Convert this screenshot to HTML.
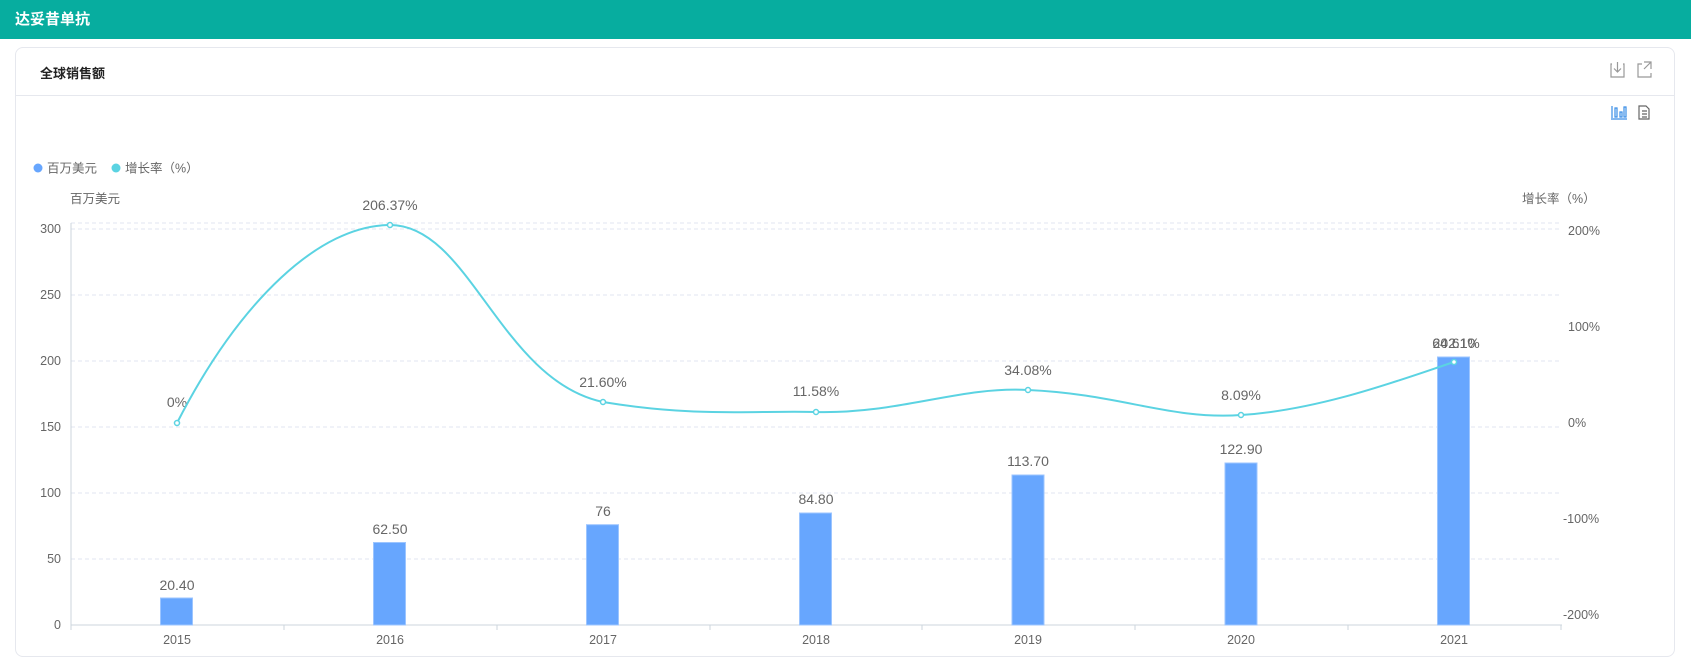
<!DOCTYPE html>
<html><head><meta charset="utf-8"><style>
body{margin:0;width:1691px;height:671px;background:#fff;font-family:"Liberation Sans","Noto Sans CJK SC",sans-serif;overflow:hidden;position:relative}
.top{position:absolute;left:0;top:0;width:1691px;height:39px;background:#07ad9f;color:#fff;font-weight:bold;font-size:15px;line-height:39px;padding-left:15px;box-sizing:border-box}
.card{position:absolute;left:15px;top:47px;width:1660px;height:610px;border:1px solid #e6e8ee;border-radius:8px;box-sizing:border-box}
.hd{position:absolute;left:0;top:47px;width:100%;height:0;border-top:1px solid #e6e8ee}
.title{position:absolute;left:24px;top:15px;font-size:13px;font-weight:bold;color:#222}
svg{position:absolute;left:0;top:0}
</style></head><body>
<div class="top">达妥昔单抗</div>
<div class="card"><div class="title">全球销售额</div><div class="hd"></div></div>
<svg width="1691" height="671" font-family="Liberation Sans, Noto Sans CJK SC, sans-serif">
<g fill="none" stroke="#999" stroke-width="1.2">
<path d="M1612 64h-1v13h13v-13h-1"/><path d="M1617.5 62v10M1614 68.5l3.5 3.5 3.5-3.5"/>
<path d="M1642 64h-4v13h13v-4"/><path d="M1644 62h7v7M1651 62l-7 7"/>
</g>
<g fill="none" stroke="#3a8ee6" stroke-width="1.2"><path d="M1612 106v12M1615 108h2v9h-2zM1620 112h2v5h-2zM1624 107h2v10h-2zM1611 119h16"/></g>
<g fill="none" stroke="#666" stroke-width="1.2"><path d="M1639 106h7l3 3v10h-10zM1642 111h5M1642 114h5M1642 117h5"/></g>
<circle cx="38" cy="168" r="4.5" fill="#67a6fe"/><text x="47" y="172.5" font-size="12.5" fill="#666">百万美元</text>
<circle cx="116" cy="168" r="4.5" fill="#5bd3e2"/><text x="125" y="172.5" font-size="12.5" fill="#666">增长率（%）</text>
<text x="70" y="203" font-size="12.5" fill="#666">百万美元</text>
<text x="1522" y="203" font-size="12.5" fill="#666">增长率（%）</text>
<g stroke="#e0e6f1" stroke-dasharray="4 3">
<path d="M71 223H1560M71 229H1560M71 295H1560M71 361H1560M71 427H1560M71 493H1560M71 559H1560"/>
</g>
<path d="M71 223V625" stroke="#ccd6dc"/>
<path d="M71 625H1562M71 625v5M284 625v5M497 625v5M710 625v5M922 625v5M1135 625v5M1348 625v5M1561 625v5" stroke="#ccd6dc"/>
<g font-size="12.5" fill="#666" text-anchor="end">
<text x="61" y="233">300</text><text x="61" y="299">250</text><text x="61" y="365">200</text><text x="61" y="431">150</text><text x="61" y="497">100</text><text x="61" y="563">50</text><text x="61" y="629">0</text>
</g>
<g font-size="12.5" fill="#666">
<text x="1568" y="235">200%</text><text x="1568" y="331">100%</text><text x="1568" y="427">0%</text><text x="1563" y="523">-100%</text><text x="1563" y="619">-200%</text>
</g>
<g font-size="12.5" fill="#666" text-anchor="middle">
<text x="177" y="644">2015</text><text x="390" y="644">2016</text><text x="603" y="644">2017</text><text x="816" y="644">2018</text><text x="1028" y="644">2019</text><text x="1241" y="644">2020</text><text x="1454" y="644">2021</text>
</g>
<g fill="#67a6fe" stroke="#9cc5ff" stroke-width="1">
<rect x="160.5" y="598" width="32" height="27"/>
<rect x="373.5" y="542.5" width="32" height="82.5"/>
<rect x="586.5" y="524.7" width="32" height="100.3"/>
<rect x="799.5" y="513" width="32" height="112"/>
<rect x="1012" y="475" width="32" height="150"/>
<rect x="1225" y="463" width="32" height="162"/>
<rect x="1437.5" y="357" width="32" height="268"/>
</g>
<g font-size="14" fill="#666" text-anchor="middle">
<text x="177" y="590">20.40</text><text x="390" y="534">62.50</text><text x="603" y="516">76</text><text x="816" y="504">84.80</text><text x="1028" y="466">113.70</text><text x="1241" y="454">122.90</text>
<text x="1454" y="348">202.10</text><text x="1456" y="348">64.61%</text>
<text x="177" y="407">0%</text><text x="390" y="210">206.37%</text><text x="603" y="387">21.60%</text><text x="816" y="396">11.58%</text><text x="1028" y="375">34.08%</text><text x="1241" y="400">8.09%</text>
</g>
<path d="M177 423 C240 300,320 225,390 225 C470 225,500 380,603 402 C700 418,760 410,816 412 C900 414,960 386,1028 390 C1120 394,1170 420,1241 415 C1320 410,1400 380,1454 362" fill="none" stroke="#5bd3e2" stroke-width="2"/>
<g fill="#fff" stroke="#5bd3e2" stroke-width="1.5">
<circle cx="177" cy="423" r="2.5"/><circle cx="390" cy="225" r="2.5"/><circle cx="603" cy="402" r="2.5"/><circle cx="816" cy="412" r="2.5"/><circle cx="1028" cy="390" r="2.5"/><circle cx="1241" cy="415" r="2.5"/><circle cx="1454" cy="362" r="2.5"/>
</g>
</svg>
</body></html>
